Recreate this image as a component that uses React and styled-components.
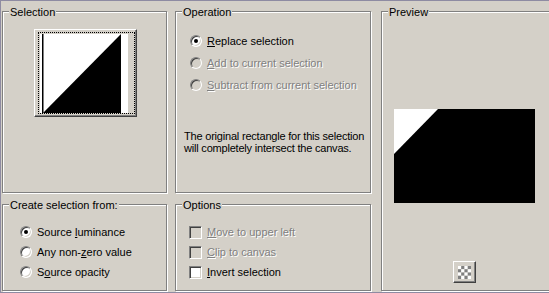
import React from 'react'
import styled, {createGlobalStyle} from 'styled-components'

const operations = [
  {key: 'R', rest: 'eplace selection', checked: true},
  {key: 'A', rest: 'dd to current selection', disabled: true},
  {key: 'S', rest: 'ubtract from current selection', disabled: true},
]

export default function App() {
  return (
    <Dialog>
      <GlobalStyle />
      <GroupBox>
        <Legend>Selection</Legend>
        <SelectionBody>
          <ImageButton>
            <Focus>
              <svg width="88" height="79" viewBox="0 0 88 79">
                <rect width="88" height="79" fill="#fff" />
                <rect x="2" y="0" width="1.5" height="79" fill="#000" />
                <polygon points="3,79 81,0 81,79" fill="#000" />
              </svg>
            </Focus>
          </ImageButton>
        </SelectionBody>
      </GroupBox>

      <GroupBox>
        <Legend>Operation</Legend>
        <OptionList $top={18} $left={14} $row={22}>
          {operations.map(op => (
            <Row key={op.key}>
              <Radio $checked={op.checked} $disabled={op.disabled} />
              <Label $disabled={op.disabled}><u>{op.key}</u>{op.rest}</Label>
            </Row>
          ))}
        </OptionList>
        <Note>
          The original rectangle for this selection<br />
          will completely intersect the canvas.
        </Note>
      </GroupBox>

      <PreviewBox>
        <Legend>Preview</Legend>
        <PreviewBody>
          <svg width="141" height="94" viewBox="0 0 141 94">
            <rect width="141" height="94" fill="#000" />
            <polygon points="0,0 44,0 0,45" fill="#fff" />
          </svg>
          <SmallButton>
            <svg width="13" height="13" viewBox="0 0 12 12">
              {[0, 1, 2, 3].map(r => [0, 1, 2, 3].map(c => (
                <rect key={r + '-' + c} x={c * 3} y={r * 3} width="3" height="3"
                  fill={(r + c) % 2 ? '#808080' : '#fff'} />
              )))}
            </svg>
          </SmallButton>
        </PreviewBody>
      </PreviewBox>

      <GroupBox>
        <Legend>Create selection from:</Legend>
        <OptionList $top={17} $left={17} $row={20}>
          <Row>
            <Radio $checked />
            <Label>Source <u>l</u>uminance</Label>
          </Row>
          <Row>
            <Radio />
            <Label>Any non-<u>z</u>ero value</Label>
          </Row>
          <Row>
            <Radio />
            <Label>S<u>o</u>urce opacity</Label>
          </Row>
        </OptionList>
      </GroupBox>

      <GroupBox>
        <Legend>Options</Legend>
        <OptionList $top={17} $left={13} $row={20}>
          <Row>
            <Check $disabled />
            <Label $disabled><u>M</u>ove to upper left</Label>
          </Row>
          <Row>
            <Check $disabled />
            <Label $disabled><u>C</u>lip to canvas</Label>
          </Row>
          <Row>
            <Check />
            <Label><u>I</u>nvert selection</Label>
          </Row>
        </OptionList>
      </GroupBox>
    </Dialog>
  )
}

////// STYLED COMPONENTS //////
const GlobalStyle = createGlobalStyle`
  body {
    margin: 0;
    background: #d4d0c8;
    font-family: "Liberation Sans", Arial, sans-serif;
    font-size: 11px;
  }
`
const Dialog = styled.div`
  box-sizing: border-box;
  width: 549px;
  height: 293px;
  overflow: hidden;
  background: #d4d0c8;
  border-top: 1px solid #8e8ba2;
  border-left: 1px solid #8e8ba2;
  border-bottom: 1px solid #8e8ba2;
  padding: 10px 0 0 1px;
  display: grid;
  grid-template-columns: 165px 196px 172px;
  grid-template-rows: 182px 87px;
  column-gap: 8px;
  row-gap: 11px;
  color: #000;
`
const GroupBox = styled.div`
  position: relative;
  box-sizing: border-box;
  border: 1px solid #808080;
  box-shadow: inset 1px 1px 0 #fff, 1px 1px 0 #fff;
`
const PreviewBox = styled(GroupBox)`
  grid-column: 3;
  grid-row: 1 / span 2;
  margin-left: 2px;
`
const Legend = styled.span`
  position: absolute;
  top: -6px;
  left: 6px;
  padding: 0 1px;
  line-height: 13px;
  background: #d4d0c8;
  white-space: nowrap;
`
const SelectionBody = styled.div`
  display: flex;
  padding: 17px 0 0 31px;
`
const ImageButton = styled.div`
  box-sizing: border-box;
  width: 103px;
  height: 88px;
  padding: 2px 0 0 3px;
  border: 1px solid;
  border-color: #fff #404040 #404040 #fff;
  box-shadow: inset -1px -1px 0 #808080;
`
const Focus = styled.div`
  box-sizing: border-box;
  width: 97px;
  height: 82px;
  border: 1px dotted #000;
  padding: 1px;
  svg { display: block; }
`
const OptionList = styled.div`
  display: flex;
  flex-direction: column;
  padding: ${p => p.$top}px 0 0 ${p => p.$left}px;
  & > div { height: ${p => p.$row}px; }
`
const Row = styled.div`
  display: flex;
  align-items: center;
  gap: 5px;
`
const Label = styled.span`
  line-height: 13px;
  white-space: nowrap;
  color: ${p => p.$disabled ? '#808080' : '#000'};
  text-shadow: ${p => p.$disabled ? '1px 1px 0 #fff' : 'none'};
`
const Radio = styled.span`
  position: relative;
  box-sizing: border-box;
  flex: none;
  width: 12px;
  height: 12px;
  border-radius: 50%;
  border: 1px solid;
  border-color: #808080 #fff #fff #808080;
  box-shadow: inset 1px 1px 0 #404040, inset -1px -1px 0 #d4d0c8;
  background: ${p => p.$disabled ? '#d4d0c8' : '#fff'};
  &::after {
    content: '';
    display: ${p => p.$checked ? 'block' : 'none'};
    position: absolute;
    left: 3px;
    top: 3px;
    width: 4px;
    height: 4px;
    border-radius: 50%;
    background: #000;
  }
`
const Check = styled.span`
  box-sizing: border-box;
  flex: none;
  width: 13px;
  height: 13px;
  border: 1px solid;
  border-color: #808080 #fff #fff #808080;
  box-shadow: inset 1px 1px 0 #404040, inset -1px -1px 0 #d4d0c8;
  background: ${p => p.$disabled ? '#d4d0c8' : '#fff'};
`
const Note = styled.div`
  margin-top: 34px;
  padding-left: 8px;
  line-height: 12px;
  letter-spacing: -0.2px;
  white-space: nowrap;
`
const PreviewBody = styled.div`
  display: flex;
  flex-direction: column;
  align-items: center;
  width: 141px;
  padding: 97px 0 0 12px;
  svg { display: block; }
`
const SmallButton = styled.div`
  box-sizing: border-box;
  margin-top: 58px;
  width: 23px;
  height: 22px;
  display: flex;
  align-items: center;
  justify-content: center;
  border: 1px solid;
  border-color: #fff #404040 #404040 #fff;
  box-shadow: inset -1px -1px 0 #808080;
`
